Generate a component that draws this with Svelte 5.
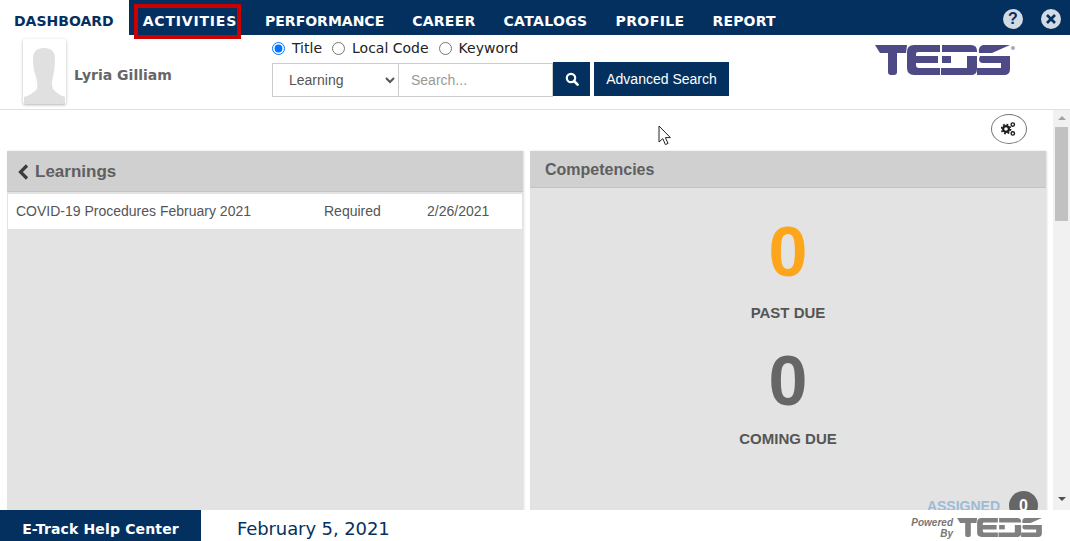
<script>
  const tabs = [
    { name: 'DASHBOARD', spacing: 0 },
    { name: 'ACTIVITIES', spacing: 0.8 },
    { name: 'PERFORMANCE', spacing: 0 },
    { name: 'CAREER', spacing: 0.25 },
    { name: 'CATALOGS', spacing: 0.35 },
    { name: 'PROFILE', spacing: 0.4 },
    { name: 'REPORT', spacing: 0.15 },
  ];
</script>

{#snippet teds()}
  <path d="M0 0H32L31 8H22V27Q22 30 19 30H16Q13 30 13 27V8H5Z" />
  <path d="M39 0H65V7H43Q41 7 41 9V11H63V18H41V20Q41 23 44 23H65V30H39Q32 30 32 23V7Q32 0 39 0Z" />
  <path d="M67 0H96Q102 0 102 6V7H67Z" />
  <rect x="67" y="11" width="9" height="7" />
  <path d="M92 11H102V24Q102 30 96 30H66V23H92Z" />
  <path d="M108 0H135L117 8H104Q103 1 108 0Z" />
  <path d="M105 11H135V24Q135 30 129 30H102V23H126V18H108Q104 18 104 14Z" />
{/snippet}

<div class="page">
  <nav class="nav">
    {#each tabs as tab, i}
      <a class="tab" class:active={i === 0} class:marked={i === 1} href="#top" style="letter-spacing: {tab.spacing}px">{tab.name}</a>
    {/each}
    <div class="nav-icons">
      <span class="round-icon">?</span>
      <span class="round-icon">
        <svg viewBox="0 0 12 12" width="12" height="12"><path d="M2 2L10 10M10 2L2 10" stroke="#04305f" stroke-width="2.6" /></svg>
      </span>
    </div>
  </nav>

  <header class="head">
    <div class="avatar">
      <svg viewBox="0 0 43 65" width="43" height="65">
        <path d="M1 65V58Q10 55 14 50Q15 45 13 38Q10 30 10 20Q10 9 21 9Q32 9 32 20Q32 30 30 38Q28 45 30 50Q34 55 42 58V65Z" fill="#e0e0e0" />
      </svg>
    </div>
    <div class="name">Lyria Gilliam</div>
    <div class="search">
      <div class="radios">
        <label><input type="radio" name="kind" checked /> Title</label>
        <label><input type="radio" name="kind" /> Local Code</label>
        <label><input type="radio" name="kind" /> Keyword</label>
      </div>
      <div class="search-row">
        <select class="select"><option>Learning</option></select>
        <input class="term" placeholder="Search..." />
        <button class="go" aria-label="Search">
          <svg viewBox="0 0 14 14" width="14" height="14"><circle cx="6" cy="6" r="4.2" fill="none" stroke="#fff" stroke-width="2.2" /><path d="M9 9L12.6 12.6" stroke="#fff" stroke-width="2.6" stroke-linecap="round" /></svg>
        </button>
        <button class="advanced">Advanced Search</button>
      </div>
    </div>
    <svg class="logo" viewBox="0 0 140 30" width="140" height="30" fill="#4d4a85">
      {@render teds()}
      <circle cx="138" cy="3" r="2" fill="#a9a8c4" />
    </svg>
  </header>

  <div class="middle">
    <main class="content">
      <div class="tools">
        <button class="gears" aria-label="Settings">
          <svg viewBox="0 0 16 16" width="16" height="16" fill="none" stroke="#1c1c1c">
            <circle cx="5" cy="8" r="2.9" stroke-width="2.2" />
            <circle cx="5" cy="8" r="4.6" stroke-width="1.6" stroke-dasharray="1.8 1.8" />
            <circle cx="11.8" cy="3.6" r="1.7" stroke-width="1.4" />
            <circle cx="11.8" cy="12.4" r="1.7" stroke-width="1.4" />
          </svg>
        </button>
      </div>
      <div class="panels">
        <section class="panel">
          <h2 class="panel-title learn">
            <svg viewBox="0 0 11 16" width="11" height="16"><path d="M9 1.5L2.5 8L9 14.5" fill="none" stroke="#3c3c3c" stroke-width="3.2" /></svg>
            Learnings
          </h2>
          <div class="row">
            <span class="r-title">COVID-19 Procedures February 2021</span>
            <span class="r-kind">Required</span>
            <span>2/26/2021</span>
          </div>
        </section>
        <section class="panel">
          <h2 class="panel-title">Competencies</h2>
          <div class="stats">
            <div class="big orange">0</div>
            <div class="label past">PAST DUE</div>
            <div class="big grey">0</div>
            <div class="label coming">COMING DUE</div>
            <div class="assigned"><span>ASSIGNED</span><b>0</b></div>
          </div>
        </section>
      </div>
    </main>
    <div class="scroll">
      <i class="up"></i>
      <div class="thumb"></div>
      <i class="down"></i>
    </div>
  </div>

  <footer class="foot">
    <div class="help">E-Track Help Center</div>
    <div class="date">February 5, 2021</div>
    <div class="powered">
      <span>Powered<br /><em>By</em></span>
      <svg viewBox="0 0 140 30" width="88" height="19" fill="#808080">{@render teds()}</svg>
    </div>
  </footer>

  <svg class="cursor" viewBox="0 0 14 21" width="14" height="21">
    <path d="M1 1V17L4.8 13.6L7.4 19.6L10 18.4L7.4 12.6H12.4Z" fill="#fff" stroke="#222" stroke-width="1" />
  </svg>
</div>

<style>
  :global(body) {
    margin: 0;
    background: #fff;
  }
  .page {
    position: relative;
    width: 1070px;
    height: 541px;
    display: flex;
    flex-direction: column;
    overflow: hidden;
    font-family: "Liberation Sans", Arial, sans-serif;
  }
  .nav {
    height: 35px;
    display: flex;
    align-items: flex-start;
    background: #04305f;
    flex: none;
  }
  .tab {
    position: relative;
    height: 35px;
    padding: 0 14px;
    color: #fff;
    text-decoration: none;
    font: bold 14px/43px "DejaVu Sans", Verdana, sans-serif;
  }
  .tab.active {
    background: #fff;
    color: #04305f;
    padding-right: 15px;
  }
  .tab.marked::after {
    content: "";
    position: absolute;
    left: 5px;
    top: 4px;
    width: 99px;
    height: 27px;
    border: 4px solid #cc0000;
  }
  .nav-icons {
    margin-left: auto;
    display: flex;
    gap: 18px;
    padding: 9px 9px 0 0;
  }
  .round-icon {
    width: 20px;
    height: 20px;
    border-radius: 50%;
    background: #d2dbe3;
    color: #04305f;
    display: flex;
    align-items: center;
    justify-content: center;
    font: bold 16px "Liberation Sans", sans-serif;
  }
  .head {
    height: 74px;
    flex: none;
    display: flex;
    border-bottom: 1px solid #e0e0e0;
    position: relative;
  }
  .avatar {
    width: 43px;
    height: 65px;
    margin: 4px 0 0 23px;
    box-shadow: 0 1px 3px rgba(0, 0, 0, 0.3);
    border-radius: 2px;
  }
  .name {
    margin: 31px 0 0 8px;
    width: 198px;
    font: bold 14px/18px "DejaVu Sans", Verdana, sans-serif;
    color: #666;
  }
  .search {
    width: 460px;
  }
  .radios {
    height: 26px;
    margin-bottom: 1px;
    display: flex;
    gap: 10px;
    align-items: center;
    font: 14px "DejaVu Sans", Verdana, sans-serif;
    color: #222;
  }
  .radios label {
    display: flex;
    align-items: center;
    gap: 7px;
  }
  .radios input {
    margin: 0;
    width: 13px;
    height: 13px;
  }
  .search-row {
    display: flex;
    align-items: flex-start;
  }
  .select {
    width: 127px;
    height: 34px;
    margin-top: 1px;
    padding-left: 12px;
    background: #fff;
    border: 1px solid #ccc;
    border-radius: 0;
    color: #555;
    font: 14px "Liberation Sans", sans-serif;
  }
  .term {
    width: 154px;
    height: 34px;
    margin-top: 1px;
    box-sizing: border-box;
    padding: 0 12px;
    border: 1px solid #ccc;
    border-left: 0;
    border-radius: 0;
    font: 14px "Liberation Sans", sans-serif;
    outline: 0;
  }
  .term::placeholder {
    color: #999;
  }
  .go,
  .advanced {
    height: 34px;
    border: 0;
    padding: 0;
    background: #04305f;
    color: #fff;
    font: 14px "Liberation Sans", sans-serif;
  }
  .go {
    width: 37px;
    display: flex;
    align-items: center;
    justify-content: center;
  }
  .advanced {
    width: 135px;
    margin-left: 4px;
  }
  .logo {
    margin: 10px 0 0 143px;
  }
  .middle {
    flex: 1;
    min-height: 0;
    display: flex;
  }
  .content {
    width: 1053px;
    overflow: hidden;
  }
  .tools {
    height: 41px;
    display: flex;
    justify-content: flex-end;
    padding-right: 26px;
    box-sizing: border-box;
    padding-top: 4px;
  }
  .gears {
    width: 36px;
    height: 30px;
    padding: 0;
    background: #fff;
    border: 1px solid #777;
    border-radius: 50%;
    display: flex;
    align-items: center;
    justify-content: center;
  }
  .panels {
    display: grid;
    grid-template-columns: 516px 516px;
    gap: 7px;
    padding-left: 7px;
  }
  .panel {
    height: 400px;
    background: #e3e3e3;
    box-shadow: 1px 0 2px rgba(0, 0, 0, 0.14);
  }
  .panel-title {
    margin: 0;
    height: 36px;
    padding-left: 15px;
    background: #d0d0d0;
    border-bottom: 1px solid #c4c4c8;
    font: bold 16px/37px "Liberation Sans", sans-serif;
    color: #5f5f5f;
  }
  .panel-title.learn {
    display: flex;
    align-items: center;
    gap: 6px;
    height: 39px;
    padding: 1px 0 0 11px;
    font-size: 17px;
  }
  .row {
    display: flex;
    height: 34px;
    margin: 2px 1px 0;
    align-items: center;
    padding: 0 0 1px 8px;
    background: #fff;
    color: #555;
    font-size: 14px;
  }
  .r-title {
    width: 308px;
  }
  .r-kind {
    width: 103px;
  }
  .stats {
    position: relative;
    height: 362px;
    text-align: center;
  }
  .big {
    font: bold 70px/84px "Liberation Sans", sans-serif;
  }
  .orange {
    color: #fda61b;
    padding-top: 22px;
  }
  .grey {
    color: #666;
    padding-top: 16px;
  }
  .label {
    font: bold 15px/20px "Liberation Sans", sans-serif;
    color: #555;
    height: 20px;
  }
  .past {
    margin-top: 9px;
  }
  .coming {
    margin-top: 6px;
  }
  .assigned {
    position: absolute;
    right: 8px;
    top: 303px;
    display: flex;
    align-items: center;
    gap: 9px;
    font: bold 14px "Liberation Sans", sans-serif;
    color: #9bbbd6;
  }
  .assigned b {
    width: 29px;
    height: 29px;
    border-radius: 50%;
    background: #666;
    color: #fff;
    font-size: 16px;
    line-height: 29px;
  }
  .scroll {
    width: 17px;
    background: #f1f1f1;
    display: flex;
    flex-direction: column;
    align-items: center;
  }
  .up,
  .down {
    width: 0;
    height: 0;
    border-left: 4px solid transparent;
    border-right: 4px solid transparent;
  }
  .up {
    margin-top: 6px;
    border-bottom: 4px solid #a3a3a3;
  }
  .down {
    margin-top: 276px;
    border-top: 4px solid #505050;
  }
  .thumb {
    width: 13px;
    height: 94px;
    margin-top: 7px;
    background: #c1c1c1;
  }
  .foot {
    height: 31px;
    flex: none;
    display: flex;
    align-items: center;
    background: #fff;
    z-index: 1;
  }
  .help {
    width: 201px;
    height: 31px;
    background: #04305f;
    color: #fff;
    text-align: center;
    font: bold 14px/39px "DejaVu Sans", Verdana, sans-serif;
    letter-spacing: 0.15px;
  }
  .date {
    margin-left: 36px;
    font: 18px "DejaVu Sans", Verdana, sans-serif;
    letter-spacing: -0.1px;
    color: #04305f;
    padding-top: 6px;
  }
  .powered {
    margin-left: auto;
    padding: 4px 25px 0 0;
    display: flex;
    align-items: center;
    gap: 4px;
    color: #777;
    font: italic bold 10px/11px "Liberation Sans", sans-serif;
    text-align: right;
  }
  .cursor {
    position: absolute;
    left: 658px;
    top: 125px;
  }
</style>
